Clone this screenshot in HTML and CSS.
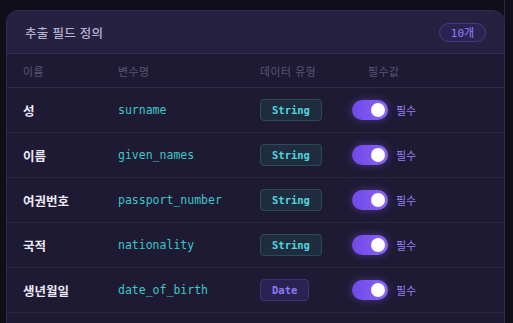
FILE: index.html
```html
<!DOCTYPE html>
<html lang="ko">
<head>
<meta charset="utf-8">
<link rel="stylesheet" href="styles.css">
</head>
<body>
<div class="frame">
  <section class="card">
    <header class="card-head">
      <h2 class="title">추출 필드 정의</h2>
      <span class="count">10개</span>
    </header>
    <div class="row head-row">
      <span>이름</span>
      <span>변수명</span>
      <span>데이터 유형</span>
      <span class="req-head">필수값</span>
    </div>
    <div class="row">
      <span class="name">성</span>
      <span class="var">surname</span>
      <span><span class="type str">String</span></span>
      <span class="req"><span class="toggle"><span class="knob"></span></span><span class="req-label">필수</span></span>
    </div>
    <div class="row">
      <span class="name">이름</span>
      <span class="var">given_names</span>
      <span><span class="type str">String</span></span>
      <span class="req"><span class="toggle"><span class="knob"></span></span><span class="req-label">필수</span></span>
    </div>
    <div class="row">
      <span class="name">여권번호</span>
      <span class="var">passport_number</span>
      <span><span class="type str">String</span></span>
      <span class="req"><span class="toggle"><span class="knob"></span></span><span class="req-label">필수</span></span>
    </div>
    <div class="row">
      <span class="name">국적</span>
      <span class="var">nationality</span>
      <span><span class="type str">String</span></span>
      <span class="req"><span class="toggle"><span class="knob"></span></span><span class="req-label">필수</span></span>
    </div>
    <div class="row">
      <span class="name">생년월일</span>
      <span class="var">date_of_birth</span>
      <span><span class="type date">Date</span></span>
      <span class="req"><span class="toggle"><span class="knob"></span></span><span class="req-label">필수</span></span>
    </div>
    <div class="card-rest"></div>
  </section>
</div>
</body>
</html>
```

FILE: styles.css
```css
html, body {
  margin: 0;
  padding: 0;
  background: #100e19;
  height: 100%;
  overflow: hidden;
}
body {
  font-family: "DejaVu Sans Mono", "Noto Sans CJK KR", monospace;
}
.frame {
  width: 505px;
  height: 100%;
  box-sizing: border-box;
  padding: 10px 0 0 6px;
  border-right: 1px solid #29253d;
}
.card {
  width: 499px;
  box-sizing: border-box;
  border: 1px solid #2f2a50;
  border-radius: 12px;
  background: #1e1a33;
  overflow: hidden;
}
.card-head {
  height: 43px;
  box-sizing: border-box;
  background: #262140;
  border-bottom: 1px solid #332d55;
  display: flex;
  align-items: center;
  justify-content: space-between;
  padding: 0 18px 0 18px;
}
.title {
  margin: 0;
  font-family: "Noto Sans CJK KR", sans-serif;
  font-size: 12.5px;
  font-weight: 500;
  color: #b8b0d6;
  letter-spacing: 0.3px;
}
.count {
  height: 19px;
  box-sizing: border-box;
  width: 47px;
  display: flex;
  align-items: center;
  justify-content: center;
  border: 1px solid #443a80;
  border-radius: 10px;
  background: #2b2452;
  color: #8f80f7;
  font-size: 11px;
  font-family: "DejaVu Sans Mono", "Noto Sans CJK KR", monospace;
}
.row {
  display: grid;
  grid-template-columns: 95px 142px 92px 1fr;
  align-items: center;
  height: 45px;
  box-sizing: border-box;
  padding-left: 16px;
  border-bottom: 1px solid #29243f;
}
.head-row {
  height: 34px;
  border-bottom: 1px solid #312b50;
  font-family: "Noto Sans CJK KR", sans-serif;
  font-size: 10.8px;
  color: #5a5478;
  letter-spacing: 0.6px;
}
.req-head {
  padding-left: 16px;
}
.name {
  font-family: "Noto Sans CJK KR", sans-serif;
  font-weight: 700;
  font-size: 12.5px;
  color: #ece8f6;
}
.var {
  font-size: 11.5px;
  color: #3ac8c9;
}
.type {
  display: inline-flex;
  align-items: center;
  height: 22px;
  box-sizing: border-box;
  padding: 0 11px;
  border-radius: 4px;
  font-size: 10.5px;
  font-weight: 700;
}
.type.str {
  background: #1f2c3f;
  border: 1px solid #2b4b5b;
  color: #4fd6dc;
}
.type.date {
  background: #2a2250;
  border: 1px solid #3e3472;
  color: #8d7bf6;
}
.req {
  display: flex;
  align-items: center;
  gap: 8px;
}
.toggle {
  width: 36px;
  height: 20px;
  border-radius: 10px;
  background: linear-gradient(90deg, #7049e8, #8a64f5);
  box-shadow: 0 0 8px rgba(124, 92, 240, 0.45);
  display: flex;
  align-items: center;
  justify-content: flex-end;
  padding: 0 3px;
  box-sizing: border-box;
}
.knob {
  width: 14px;
  height: 14px;
  border-radius: 50%;
  background: #ffffff;
}
.req-label {
  font-family: "Noto Sans CJK KR", sans-serif;
  font-size: 11px;
  color: #9b7ff5;
}
.card-rest {
  height: 40px;
}
```
